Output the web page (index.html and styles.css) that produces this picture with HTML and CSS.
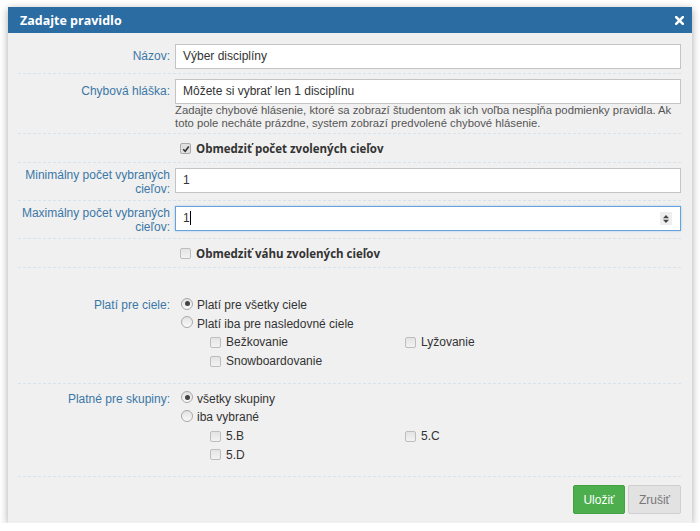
FILE: index.html
```html
<!DOCTYPE html>
<html lang="sk">
<head>
<meta charset="utf-8">
<title>Zadajte pravidlo</title>
<link rel="stylesheet" href="styles.css">
</head>
<body>
<div class="dialog">
  <div class="dialog-header">
    <span class="dialog-title">Zadajte pravidlo</span>
    <svg class="close" width="9" height="9" viewBox="0 0 9 9"><path d="M1.2 1.2 L7.8 7.8 M7.8 1.2 L1.2 7.8" stroke="#fff" stroke-width="2.6" stroke-linecap="square"/></svg>
  </div>
  <div class="dialog-body">
    <div class="row">
      <div class="label">Názov:</div>
      <div class="field"><div class="input">Výber disciplíny</div></div>
    </div>
    <div class="row row-help">
      <div class="label">Chybová hláška:</div>
      <div class="field">
        <div class="input">Môžete si vybrať len 1 disciplínu</div>
        <div class="help">Zadajte chybové hlásenie, ktoré sa zobrazí študentom ak ich voľba nespĺňa podmienky pravidla. Ak toto pole necháte prázdne, system zobrazí predvolené chybové hlásenie.</div>
      </div>
    </div>
    <div class="row">
      <div></div>
      <div class="check-line"><span class="cb cb-checked"><svg width="8" height="8" viewBox="0 0 8 8"><path d="M1.2 4.2 L3.2 6.2 L6.8 1.6" fill="none" stroke="#333" stroke-width="1.6"/></svg></span><span class="strong">Obmedziť počet zvolených cieľov</span></div>
    </div>
    <div class="row">
      <div class="label label-multi">Minimálny počet vybraných cieľov:</div>
      <div class="field"><div class="input">1</div></div>
    </div>
    <div class="row">
      <div class="label label-multi">Maximálny počet vybraných cieľov:</div>
      <div class="field">
        <div class="input input-focus">1<span class="caret"></span>
          <span class="spinner"><svg width="8" height="10" viewBox="0 0 8 10"><path d="M4 1 L7 4.2 L1 4.2 Z M4 9 L7 5.8 L1 5.8 Z" fill="#444"/></svg></span>
        </div>
      </div>
    </div>
    <div class="row">
      <div></div>
      <div class="check-line"><span class="cb"></span><span class="strong">Obmedziť váhu zvolených cieľov</span></div>
    </div>
    <div class="row section section-first">
      <div class="label label-list">Platí pre ciele:</div>
      <div class="list">
        <div class="radio-line"><span class="radio radio-on"></span>Platí pre všetky ciele</div>
        <div class="radio-line"><span class="radio"></span>Platí iba pre nasledovné ciele</div>
        <div class="sub-grid">
          <div class="sub-item"><span class="cb"></span>Bežkovanie</div>
          <div class="sub-item"><span class="cb"></span>Lyžovanie</div>
          <div class="sub-item"><span class="cb"></span>Snowboardovanie</div>
        </div>
      </div>
    </div>
    <div class="row section">
      <div class="label label-list">Platné pre skupiny:</div>
      <div class="list">
        <div class="radio-line"><span class="radio radio-on"></span>všetky skupiny</div>
        <div class="radio-line"><span class="radio"></span>iba vybrané</div>
        <div class="sub-grid">
          <div class="sub-item"><span class="cb"></span>5.B</div>
          <div class="sub-item"><span class="cb"></span>5.C</div>
          <div class="sub-item"><span class="cb"></span>5.D</div>
        </div>
      </div>
    </div>
    <div class="footer">
      <button class="btn btn-save">Uložiť</button>
      <button class="btn btn-cancel">Zrušiť</button>
    </div>
  </div>
</div>
</body>
</html>
```
FILE: styles.css
```css
html, body {
  margin: 0;
  padding: 0;
  background: #ffffff;
}
body {
  font-family: "Liberation Sans", Arial, sans-serif;
  font-size: 12px;
  color: #333;
}
.dialog {
  margin: 7px 0 0 8px;
  width: 684px;
  background: #f0f0f0;
  box-shadow: 0 2px 8px rgba(0,0,0,0.35);
}
.dialog-header {
  height: 26px;
  background: #2b6ca3;
  display: flex;
  align-items: center;
  justify-content: space-between;
  padding: 0 8px 0 12px;
}
.dialog-title {
  font-family: "Open Sans", "Liberation Sans", sans-serif;
  font-weight: 700;
  font-size: 12.5px;
  color: #fff;
}
.close {
  display: block;
  margin-top: 1px;
}
.dialog-body {
  padding: 6px 11px 9px 10px;
}
.row {
  display: grid;
  grid-template-columns: 152px 1fr;
  column-gap: 5px;
  padding: 5px 0 4px;
  border-bottom: 1px dashed #d8e2ea;
}
.row-help {
  padding-bottom: 3px;
}
.label {
  text-align: right;
  color: #3b77a6;
  line-height: 14px;
  padding-top: 5px;
}
.label-multi {
  padding-top: 0;
}
.label-list {
  padding-top: 0;
  line-height: 18.67px;
}
.input {
  position: relative;
  box-sizing: border-box;
  height: 25px;
  line-height: 23px;
  border: 1px solid #c4c4c4;
  background: #fff;
  padding: 0 7px;
  color: #333;
}
.input-focus {
  border-color: #66a3dc;
  box-shadow: 0 0 2px rgba(102,163,220,0.5);
}
.caret {
  display: inline-block;
  width: 1px;
  height: 14px;
  background: #000;
  vertical-align: -3px;
}
.spinner {
  position: absolute;
  right: 8px;
  top: 5px;
  width: 12px;
  height: 13px;
  background: #eee;
  display: flex;
  align-items: center;
  justify-content: center;
}
.help {
  font-size: 11.3px;
  line-height: 13px;
  color: #555;
}
.check-line {
  display: flex;
  align-items: center;
  height: 19px;
}
.check-line .cb {
  margin: 0 5px 0 5px;
}
.strong {
  font-family: "Open Sans", "Liberation Sans", sans-serif;
  font-weight: 700;
  font-size: 11.5px;
  color: #333;
}
.cb {
  box-sizing: border-box;
  width: 11px;
  height: 11px;
  border: 1px solid #bdbdbd;
  border-radius: 2px;
  background: linear-gradient(#e4e4e4, #f2f2f2);
  display: inline-flex;
  align-items: center;
  justify-content: center;
  flex: none;
}
.cb-checked {
  background: #e0e0e0;
  border-color: #aaa;
}
.section {
  padding: 26px 0 12px;
}
.section-first {
  padding-top: 28px;
}
.section + .section {
  padding-top: 6px;
}
.list {
  line-height: 18.67px;
}
.radio-line {
  display: flex;
  align-items: center;
  height: 18.67px;
}
.radio {
  box-sizing: border-box;
  width: 12px;
  height: 12px;
  border-radius: 50%;
  border: 1px solid #a8a8a8;
  background: linear-gradient(#e2e2e2, #fafafa);
  margin: -3px 4px 0 6px;
  display: inline-flex;
  align-items: center;
  justify-content: center;
  flex: none;
}
.radio-on::after {
  content: "";
  width: 5px;
  height: 5px;
  border-radius: 50%;
  background: #444;
}
.sub-grid {
  margin-left: 35px;
  display: grid;
  grid-template-columns: 195px 195px;
}
.sub-item {
  display: flex;
  align-items: center;
  height: 18.67px;
}
.sub-item .cb {
  margin-right: 5px;
}
.footer {
  display: flex;
  justify-content: flex-end;
  gap: 3px;
  padding-top: 8px;
}
.btn {
  font-family: "Liberation Sans", Arial, sans-serif;
  font-size: 12px;
  height: 29px;
  border-radius: 2px;
  padding: 0;
  cursor: pointer;
}
.btn-save {
  width: 52px;
  background: #4cae4c;
  border: 1px solid #43a043;
  color: #fff;
}
.btn-cancel {
  width: 53px;
  background: #e2e2e2;
  border: 1px solid #cfcfcf;
  color: #777;
}
```
